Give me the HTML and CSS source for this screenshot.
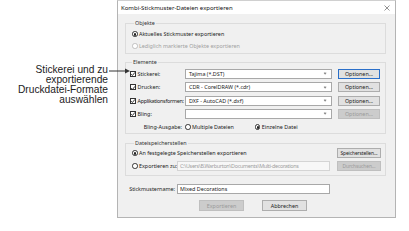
FILE: index.html
```html
<!DOCTYPE html>
<html lang="de">
<head>
<meta charset="utf-8">
<title>Kombi-Stickmuster-Dateien exportieren</title>
<link rel="stylesheet" href="styles.css">
</head>
<body>
<div class="page">
  <div class="note">Stickerei und zu<br>exportierende<br>Druckdatei-Formate<br>auswählen</div>
  <svg class="arrow" width="22" height="8" viewBox="0 0 22 8"><line x1="0" y1="4" x2="18" y2="4" stroke="#333" stroke-width="1"/><polygon points="16,1.5 21,4 16,6.5" fill="#333"/></svg>
  <div class="dialog">
    <div class="titlebar">
      <span class="title">Kombi-Stickmuster-Dateien exportieren</span>
      <svg class="close" width="6" height="6" viewBox="0 0 6 6"><path d="M0.5 0.5 L5.5 5.5 M5.5 0.5 L0.5 5.5" stroke="#777" stroke-width="0.8"/></svg>
    </div>
    <div class="body">
      <div class="grp g-obj">
        <div class="legend">Objekte</div>
        <div class="opt r1"><span class="radio on"></span>Aktuelles Stickmuster exportieren</div>
        <div class="opt r2 dis"><span class="radio"></span>Lediglich markierte Objekte exportieren</div>
      </div>

      <div class="grp g-el">
        <div class="legend">Elemente</div>
        <div class="row el-row first">
          <div class="lbl-col"><span class="chk"><svg width="6" height="6" viewBox="0 0 6 6"><path d="M1 3.1 L2.4 4.5 L5 1.3" fill="none" stroke="#222" stroke-width="0.9"/></svg></span>Stickerei:</div>
          <div class="combo">Tajima (*.DST)<span class="chev"></span></div>
          <div class="btn focus">Optionen...</div>
        </div>
        <div class="row el-row">
          <div class="lbl-col"><span class="chk"><svg width="6" height="6" viewBox="0 0 6 6"><path d="M1 3.1 L2.4 4.5 L5 1.3" fill="none" stroke="#222" stroke-width="0.9"/></svg></span>Drucken:</div>
          <div class="combo">CDR - CorelDRAW (*.cdr)<span class="chev"></span></div>
          <div class="btn">Optionen...</div>
        </div>
        <div class="row el-row">
          <div class="lbl-col tight"><span class="chk"><svg width="6" height="6" viewBox="0 0 6 6"><path d="M1 3.1 L2.4 4.5 L5 1.3" fill="none" stroke="#222" stroke-width="0.9"/></svg></span>Applikationsformen:</div>
          <div class="combo">DXF - AutoCAD (*.dxf)<span class="chev"></span></div>
          <div class="btn">Optionen...</div>
        </div>
        <div class="row el-row">
          <div class="lbl-col"><span class="chk"><svg width="6" height="6" viewBox="0 0 6 6"><path d="M1 3.1 L2.4 4.5 L5 1.3" fill="none" stroke="#222" stroke-width="0.9"/></svg></span>Bling:</div>
          <div class="combo"><span class="chev"></span></div>
          <div class="btn dis">Optionen...</div>
        </div>
        <div class="row el-row">
          <div class="lbl-col right">Bling-Ausgabe:</div>
          <div class="ausg">
            <span class="opt"><span class="radio"></span>Multiple Dateien</span>
            <span class="opt einz"><span class="radio on"></span>Einzelne Datei</span>
          </div>
        </div>
      </div>

      <div class="grp g-ds">
        <div class="legend">Dateispeicherstellen</div>
        <div class="row ds-row first">
          <div class="opt grow"><span class="radio on"></span>An festgelegte Speicherstellen exportieren</div>
          <div class="btn wide">Speicherstellen...</div>
        </div>
        <div class="row ds-row">
          <div class="opt ds-lbl"><span class="radio"></span>Exportieren zu:</div>
          <div class="field dis path">C:\Users\B.Warburton\Documents\Multi-decorations</div>
          <div class="btn wide dis">Durchsuchen...</div>
        </div>
      </div>

      <div class="row name-row">
        <div class="name-lbl">Stickmustername:</div>
        <div class="field">Mixed Decorations</div>
      </div>

      <div class="actions">
        <div class="btn big dis">Exportieren</div>
        <div class="btn big">Abbrechen</div>
      </div>
    </div>
  </div>
</div>
</body>
</html>
```
FILE: styles.css
```css
*, *::before, *::after {
  box-sizing: border-box;
}
html, body {
  margin: 0;
  padding: 0;
  background: #ffffff;
}
.page {
  position: relative;
  display: flex;
  align-items: flex-start;
  width: 409px;
  height: 231px;
}
.note {
  flex: none;
  width: 108px;
  margin-right: 9px;
  padding-top: 65px;
  font-family: "Liberation Sans", Arial, sans-serif;
  font-size: 10.2px;
  line-height: 10px;
  color: #222;
  text-align: right;
}
.arrow {
  position: absolute;
  left: 109px;
  top: 67px;
}
.dialog {
  flex: none;
  width: 279px;
  height: 218px;
  border: 1px solid #b4b4b4;
  border-top-color: #d0d0d0;
  background: #f0f0f0;
  font-family: "Noto Sans", "Open Sans", sans-serif;
  font-size: 5.4px;
  color: #1a1a1a;
  display: flex;
  flex-direction: column;
  overflow: hidden;
}
.titlebar {
  flex: none;
  height: 13px;
  background: #ffffff;
  display: flex;
  align-items: center;
  justify-content: space-between;
  padding: 0 5px 0 3px;
}
.title {
  font-size: 6px;
  color: #111;
}
.close {
  display: block;
}
.body {
  width: 277px;
  padding: 0 9px 0 7px;
}
.grp {
  width: 261px;
  border: 1px solid #dcdcdc;
  display: flex;
  flex-direction: column;
}
.legend {
  height: 6px;
  line-height: 6px;
  margin-top: -4px;
  margin-left: 2px;
  padding: 0 1px;
  align-self: flex-start;
  background: #f0f0f0;
  color: #333;
  white-space: nowrap;
}
.row {
  display: flex;
  align-items: stretch;
  height: 10px;
  width: 100%;
}
.opt {
  display: flex;
  align-items: center;
  height: 10px;
  white-space: nowrap;
}
.dis {
  color: #a0a0a0;
}
.radio {
  flex: none;
  position: relative;
  width: 5.5px;
  height: 5.5px;
  border: 0.7px solid #333;
  border-radius: 50%;
  background: #fff;
  margin-right: 1.5px;
}
.radio.on::after {
  content: "";
  position: absolute;
  left: 1px;
  top: 1px;
  width: 2.4px;
  height: 2.4px;
  border-radius: 50%;
  background: #222;
}
.dis .radio {
  border-color: #c0c0c0;
}

/* Objekte */
.g-obj {
  margin-top: 9px;
  padding: 0 6px 2px 6px;
}
.g-obj .r1 { margin-top: 3px; }
.g-obj .r2 { margin-top: 2px; }

/* Elemente */
.g-el {
  margin-top: 8px;
  padding: 0 5px 1px 4px;
}
.el-row {
  margin-top: 3.3px;
}
.el-row.first {
  margin-top: 4px;
}
.lbl-col {
  flex: none;
  width: 55px;
  display: flex;
  align-items: center;
  white-space: nowrap;
}
.lbl-col.tight {
  letter-spacing: -0.28px;
}
.lbl-col.right {
  justify-content: flex-end;
  padding-right: 3px;
}
.chk {
  flex: none;
  width: 6px;
  height: 6px;
  border: 0.7px solid #333;
  background: #fff;
  margin-right: 1.5px;
  position: relative;
}
.chk svg {
  position: absolute;
  left: -0.7px;
  top: -0.7px;
  display: block;
}
.combo {
  flex: none;
  position: relative;
  width: 147px;
  background: #fff;
  border: 1px solid #a8a8a8;
  display: flex;
  align-items: center;
  padding-left: 3px;
  white-space: nowrap;
  overflow: hidden;
}
.chev {
  position: absolute;
  right: 5px;
  top: 2.3px;
  width: 2.2px;
  height: 2.2px;
  border-right: 0.6px solid #888;
  border-bottom: 0.6px solid #888;
  transform: rotate(45deg);
}
.btn {
  flex: none;
  width: 42px;
  margin-left: 6px;
  background: #e1e1e1;
  border: 1px solid #adadad;
  display: flex;
  align-items: center;
  justify-content: center;
  white-space: nowrap;
  overflow: hidden;
  color: #1a1a1a;
}
.btn.focus {
  border-color: #2a6fc9;
}
.btn.dis {
  background: #cccccc;
  border-color: #bfbfbf;
  color: #9a9a9a;
}
.ausg {
  display: flex;
  align-items: center;
}
.ausg .einz {
  margin-left: 21px;
}

/* Dateispeicherstellen */
.g-ds {
  margin-top: 9px;
  padding: 0 4px 4px 6px;
}
.ds-row {
  margin-top: 3px;
}
.ds-row.first {
  margin-top: 2px;
}
.grow {
  flex: 1 1 0;
  min-width: 0;
  overflow: hidden;
}
.ds-lbl {
  flex: 0 0 45px;
  width: 45px;
  min-width: 0;
}
.field {
  flex: 0 0 153px;
  width: 153px;
  min-width: 0;
  background: #fff;
  border: 1px solid #a8a8a8;
  display: flex;
  align-items: center;
  padding-left: 2px;
  white-space: nowrap;
  overflow: hidden;
}
.field.dis {
  background: #f7f7f7;
  border-color: #d4d4d4;
}
.field.path {
  letter-spacing: -0.3px;
}
.btn.wide {
  flex: 0 0 44px;
  width: 44px;
  margin-left: 7px;
  font-size: 4.9px;
  letter-spacing: -0.1px;
}

/* name + actions */
.name-row {
  margin-top: 8px;
}
.name-lbl {
  flex: none;
  width: 52px;
  padding-right: 2px;
  display: flex;
  align-items: center;
  justify-content: flex-end;
  white-space: nowrap;
}
.actions {
  margin-top: 6px;
  display: flex;
  justify-content: center;
  gap: 18px;
  padding-right: 5px;
}
.btn.big {
  width: 45px;
  height: 11px;
  margin-left: 0;
}
```
